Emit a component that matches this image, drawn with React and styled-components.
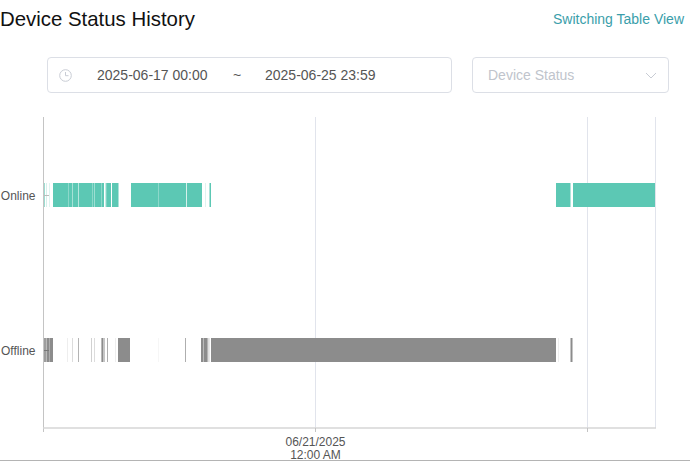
import React from 'react';
import styled, { createGlobalStyle } from 'styled-components';

const GlobalStyle = createGlobalStyle`
  html, body {
    margin: 0;
    padding: 0;
    background: #fff;
    font-family: "Liberation Sans", Arial, sans-serif;
  }
`;

const Page = styled.div`
  width: 690px;
  height: 461px;
  box-sizing: border-box;
  border-bottom: 1px solid #b4b4b4;
  overflow: hidden;
  display: flex;
  flex-direction: column;
`;

const Header = styled.div`
  height: 38px;
  flex: none;
  padding: 0 6px 0 0;
  display: flex;
  align-items: center;
  justify-content: space-between;
`;

const Title = styled.h1`
  margin: 0;
  font-size: 20.4px;
  font-weight: 400;
  color: #111;
`;

const SwitchLink = styled.a`
  font-size: 14px;
  color: #3a9eaa;
  cursor: pointer;
`;

const Filters = styled.div`
  flex: none;
  margin-top: 19px;
  padding: 0 21px 0 47px;
  display: flex;
  gap: 20px;
`;

const Field = styled.div`
  height: 36px;
  box-sizing: border-box;
  border: 1px solid #dcdfe6;
  border-radius: 4px;
  display: flex;
  align-items: center;
  font-size: 14px;
`;

const DateField = styled(Field)`
  width: 405px;
  padding-left: 11px;
  color: #555;
`;

const ClockIcon = styled.svg`
  width: 13px;
  height: 13px;
  flex: none;
  margin-right: 25px;
`;

const DateText = styled.span`
  width: 112px;
  white-space: nowrap;
`;

const Tilde = styled.span`
  width: 56px;
  text-align: center;
`;

const SelectField = styled(Field)`
  width: 197px;
  padding: 0 11px 0 15px;
  justify-content: space-between;
  color: #c0c4cc;
`;

const Chart = styled.svg`
  display: block;
  flex: none;
`;

const AxisText = styled.text`
  font-family: "Liberation Sans", Arial, sans-serif;
  font-size: 12px;
  fill: #555;
`;

// [x, width, opacity] in chart pixels, opacity left out means solid
const onlineBars = [
  [43.5, 1.5, 0.6], [46, 1, 0.25], [49, 1, 0.2],
  [53, 15], [68, 1, 0.7], [69, 3], [72, 1, 0.55], [73, 5], [78, 1, 0.45], [79, 13],
  [92, 1, 0.7], [93, 1], [94, 1, 0.6], [95, 6], [101, 1, 0.7], [102, 2], [105, 1, 0.35], [106, 1, 0.8],
  [107, 4], [112, 6.5],
  [131, 27], [158, 1, 0.7], [159, 27], [186, 1, 0.25], [187, 15], [205, 1, 0.2], [209.5, 1.5],
  [556, 14.5], [573, 82],
];

const offlineBars = [
  [44, 2, 0.85], [46, 1, 0.6], [47, 2], [49, 1, 0.7], [50, 3],
  [67, 1, 0.15], [72, 1, 0.3], [78, 1, 0.65], [91, 1, 0.4], [94, 1, 0.3],
  [101, 1, 0.6], [102, 1.5], [104, 1, 0.5], [107, 1, 0.7], [115, 1, 0.15],
  [118, 12], [158, 1, 0.08], [185, 1, 0.7],
  [201, 2], [203, 1, 0.6], [204, 3.5], [207.5, 1, 0.55], [209, 1, 0.2], [211, 345],
  [558, 1, 0.15], [570.5, 2],
];

const Bars = ({ items, y, color }) =>
  items.map(([x, w, o = 1]) => (
    <rect key={x} x={x} y={y} width={w} height={24} fill={color} opacity={o} />
  ));

// svg starts at y=93, so the viewBox keeps page coordinates
const StatusChart = () => (
  <Chart width="690" height="367" viewBox="0 93 690 367">
    {[315.5, 587.5, 655.5].map(x => (
      <line key={x} x1={x} x2={x} y1="117" y2="428" stroke="#e1e4ec" />
    ))}
    <Bars items={onlineBars} y={183} color="#5cc8b4" />
    <Bars items={offlineBars} y={338} color="#8c8c8c" />
    <line x1="44" x2="49" y1="195.5" y2="195.5" stroke="#bbb" />
    <line x1="44" x2="49" y1="350.5" y2="350.5" stroke="#777" />
    <line x1="43.5" x2="43.5" y1="117" y2="432" stroke="#c4c4c4" />
    <line x1="43" x2="656" y1="428" y2="428" stroke="#d6d6d6" strokeWidth="1.5" />
    <line x1="315.5" x2="315.5" y1="428" y2="432" stroke="#c4c4c4" />
    <line x1="587.5" x2="587.5" y1="428" y2="432" stroke="#c4c4c4" />
    <AxisText x="35.5" y="199.5" textAnchor="end">Online</AxisText>
    <AxisText x="35.5" y="354.5" textAnchor="end">Offline</AxisText>
    <AxisText x="315.5" y="445.5" textAnchor="middle">06/21/2025</AxisText>
    <AxisText x="315.5" y="458.5" textAnchor="middle">12:00 AM</AxisText>
  </Chart>
);

const App = () => {
  return (
    <Page>
      <GlobalStyle />
      <Header>
        <Title>Device Status History</Title>
        <SwitchLink>Switching Table View</SwitchLink>
      </Header>
      <Filters>
        <DateField>
          <ClockIcon viewBox="0 0 13 13" fill="none" stroke="#c8ccd4">
            <circle cx="6.5" cy="6.5" r="5.8" />
            <path d="M6.5 3v3.7h3" />
          </ClockIcon>
          <DateText>2025-06-17 00:00</DateText>
          <Tilde>~</Tilde>
          <DateText>2025-06-25 23:59</DateText>
        </DateField>
        <SelectField>
          Device Status
          <svg width="12" height="7" viewBox="0 0 12 7" fill="none" stroke="#c8ccd4">
            <path d="M1 1l5 5 5-5" />
          </svg>
        </SelectField>
      </Filters>
      <StatusChart />
    </Page>
  );
};

export default App;
